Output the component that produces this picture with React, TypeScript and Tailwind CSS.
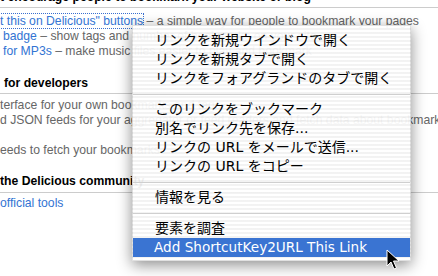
import React from "react";

const menuItems: (string | null)[] = [
  "リンクを新規ウインドウで開く",
  "リンクを新規タブで開く",
  "リンクをフォアグランドのタブで開く",
  null,
  "このリンクをブックマーク",
  "別名でリンク先を保存...",
  "リンクの URL をメールで送信...",
  "リンクの URL をコピー",
  null,
  "情報を見る",
  null,
  "要素を調査",
];

function Rule({ className = "" }: { className?: string }) {
  return <div className={`h-px bg-[#cccccc] ${className}`} />;
}

function ContextMenu() {
  return (
    <div className="absolute left-[132px] top-[25px] w-[279px] pt-[5px] pb-[3px] border border-[rgba(0,0,0,0.12)] bg-[repeating-linear-gradient(to_bottom,rgba(255,255,255,0.94)_0px,rgba(255,255,255,0.94)_2px,rgba(242,242,242,0.94)_2px,rgba(242,242,242,0.94)_4px)] shadow-[0_4px_14px_rgba(0,0,0,0.45)] text-[14px] text-black font-['DejaVu_Sans','Noto_Sans_CJK_JP',sans-serif]">
      {menuItems.map((item, i) =>
        item === null ? (
          <div key={i} className="h-[12px] flex items-center">
            <div className="h-px w-full bg-[#cfcfcf]" />
          </div>
        ) : (
          <div key={i} className="h-[19px] flex items-center pl-[22px] whitespace-nowrap">
            {item}
          </div>
        )
      )}
      <div className="h-[19px] flex items-center pl-[21px] whitespace-nowrap bg-[#3a74d2] text-white text-[13.6px]">
        Add ShortcutKey2URL This Link
      </div>
    </div>
  );
}

function Cursor() {
  return (
    <svg
      className="absolute left-[386px] top-[249px]"
      width="14"
      height="22"
      viewBox="0 0 14 22"
    >
      <path
        d="M1 1 L1 17 L5 13 L8 20 L10.5 19 L7.5 12 L13 12 Z"
        fill="#000"
        stroke="#fff"
        strokeWidth="1"
        strokeLinejoin="round"
      />
    </svg>
  );
}

export default function App() {
  return (
    <div className="relative w-[438px] h-[276px] overflow-hidden bg-white font-['Liberation_Sans',Arial,sans-serif] text-[12.2px] leading-[15px] text-[#666666]">
      <div className="flex flex-col whitespace-nowrap">
        <div className="-mt-[10px] h-[15px] font-bold text-black">
          t encourage people to bookmark your website or blog
        </div>
        <Rule className="mt-[2px]" />
        <div className="mt-[6px] h-[15px]">
          <span className="text-[#3374d3] outline-1 outline-dotted outline-[#3a6fd0]">
            t this on Delicious" buttons
          </span>{" "}
          – a simple way for people to bookmark your pages
        </div>
        <div className="h-[15px] pl-[3px]">
          <span className="text-[#3374d3]">badge</span> – show tags and number of bookmarks on your site
        </div>
        <div className="h-[15px] pl-[3px]">
          <span className="text-[#3374d3]">for MP3s</span> – make music files easier to play and bookmark
        </div>
        <div className="mt-[17px] h-[15px] pl-[4px] font-bold text-black">for developers</div>
        <Rule className="mt-[2px]" />
        <div className="mt-[4px] h-[15px]">terface for your own bookmarks and tags</div>
        <div className="h-[15px]">
          d JSON feeds for your aggregator or feed readers and fetch data about bookmark
        </div>
        <div className="h-[15px]" />
        <div className="h-[15px]">eeds to fetch your bookmarks</div>
        <div className="mt-[16px] h-[15px] font-bold text-black">the Delicious community</div>
        <Rule className="mt-[3px]" />
        <div className="mt-[3px] h-[15px] text-[#3374d3]">official tools</div>
      </div>
      <ContextMenu />
      <Cursor />
    </div>
  );
}
